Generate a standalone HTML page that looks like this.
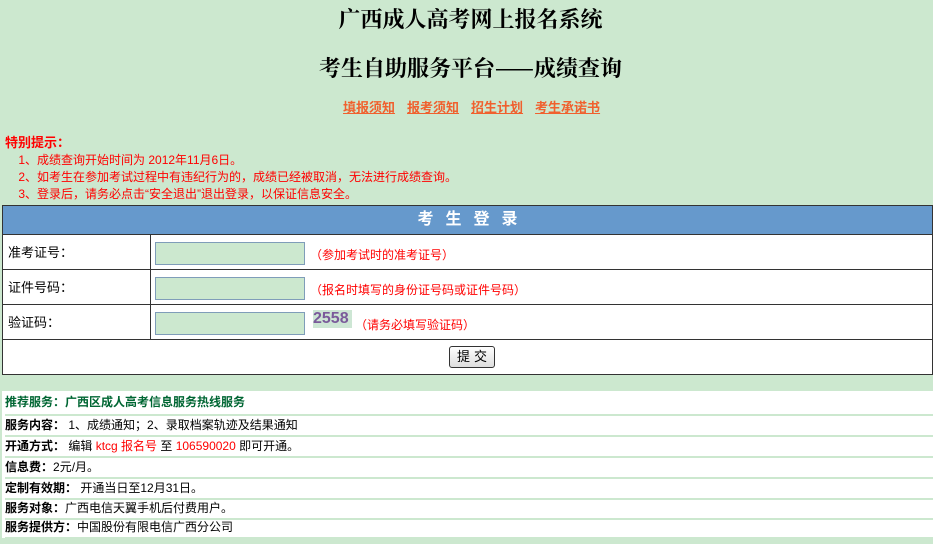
<!DOCTYPE html>
<html><head><meta charset="utf-8">
<style>
body{margin:0;width:933px;height:544px;background:#cce8cf;font-family:"Liberation Sans","SimSun","Noto Sans CJK SC",sans-serif;font-size:12px;overflow:hidden;position:relative}
.a{position:absolute}
.t1{top:3px;left:0;width:941px;text-align:center;font-size:22px;color:#000;font-weight:bold;font-family:"Noto Serif CJK SC","Noto Sans CJK SC",serif}
.t2{top:52px;left:0;width:941px;text-align:center;font-size:22px;color:#000;font-weight:bold;font-family:"Noto Serif CJK SC","Noto Sans CJK SC",serif}
.links{top:97px;left:343px;font-size:13px;font-weight:bold;color:#f0602e}
.links span{text-decoration:underline;margin-right:12px}
.tip{left:5px;top:134px;color:#f00;font-size:12px;line-height:17px}
.tip b{font-size:13px}
.box{left:2px;top:205px;width:929px;height:168px;border:1px solid #333;background:#fff}
.hd{left:0;top:0;width:929px;height:28px;background:#6699cc;border-bottom:1px solid #333;color:#fff;font-size:16px;font-weight:bold;text-align:center;line-height:28px;letter-spacing:12px;text-indent:12px}
.row{left:0;width:929px;border-bottom:1px solid #333;height:34px}
.lab{left:5px;top:7px;font-size:13px}
.inp{left:152px;top:7px;width:148px;height:21px;background:#cce8cf;border:1px solid #7f9db9}
.hint{left:307px;top:11px;color:#f00;font-size:12px}
.div{left:147px;top:29px;width:1px;height:105px;background:#333}
.btn{left:446px;top:140px;width:44px;height:20px;border:1px solid #333;border-radius:3px;background:linear-gradient(#fff,#ddd);text-align:center;font-size:13px;line-height:20px;letter-spacing:4px;text-indent:4px}
.info{left:2px;top:391px;width:931px;height:147px;background:#fff}
.ir{left:3px;font-size:12px;width:928px;border-bottom:2px solid #cce8cf;height:19px;line-height:19px}
.ir b{font-weight:bold}
.r{color:#f00}
</style></head><body>
<div class="a t1">广西成人高考网上报名系统</div>
<div class="a t2">考生自助服务平台——成绩查询</div>
<div class="a links"><span>填报须知</span><span>报考须知</span><span>招生计划</span><span>考生承诺书</span></div>
<div class="a tip"><b>特别提示：</b><br>&nbsp;&nbsp;&nbsp;&nbsp;1、成绩查询开始时间为 2012年11月6日。<br>&nbsp;&nbsp;&nbsp;&nbsp;2、如考生在参加考试过程中有违纪行为的，成绩已经被取消，无法进行成绩查询。<br>&nbsp;&nbsp;&nbsp;&nbsp;3、登录后，请务必点击“安全退出”退出登录，以保证信息安全。</div>
<div class="a box">
 <div class="a hd">考生登录</div>
 <div class="a row" style="top:29px"><div class="a lab">准考证号：</div><div class="a inp"></div><div class="a hint">（参加考试时的准考证号）</div></div>
 <div class="a row" style="top:64px"><div class="a lab">证件号码：</div><div class="a inp"></div><div class="a hint">（报名时填写的身份证号码或证件号码）</div></div>
 <div class="a row" style="top:99px"><div class="a lab">验证码：</div><div class="a inp"></div><div class="a" style="left:310px;top:5px;width:39px;height:18px;background:#cde6d4;color:#7a5a9a;font-size:16px;font-weight:bold;line-height:18px">2558</div><div class="a hint" style="left:352px">（请务必填写验证码）</div></div>
 <div class="a div"></div>
 <div class="a btn">提交</div>
</div>
<div class="a info">
 <div class="a ir" style="top:0;height:23px;line-height:22px;color:#006633;font-weight:bold">推荐服务：广西区成人高考信息服务热线服务</div>
 <div class="a ir" style="top:25px"><b>服务内容：</b> 1、成绩通知；2、录取档案轨迹及结果通知</div>
 <div class="a ir" style="top:46px"><b>开通方式：</b> 编辑 <span class="r">ktcg 报名号</span> 至 <span class="r">106590020</span> 即可开通。</div>
 <div class="a ir" style="top:67px"><b>信息费：</b>2元/月。</div>
 <div class="a ir" style="top:88px"><b>定制有效期：</b> 开通当日至12月31日。</div>
 <div class="a ir" style="top:108px"><b>服务对象：</b>广西电信天翼手机后付费用户。</div>
 <div class="a ir" style="top:127px"><b>服务提供方：</b>中国股份有限电信广西分公司</div>
</div>
</body></html>
